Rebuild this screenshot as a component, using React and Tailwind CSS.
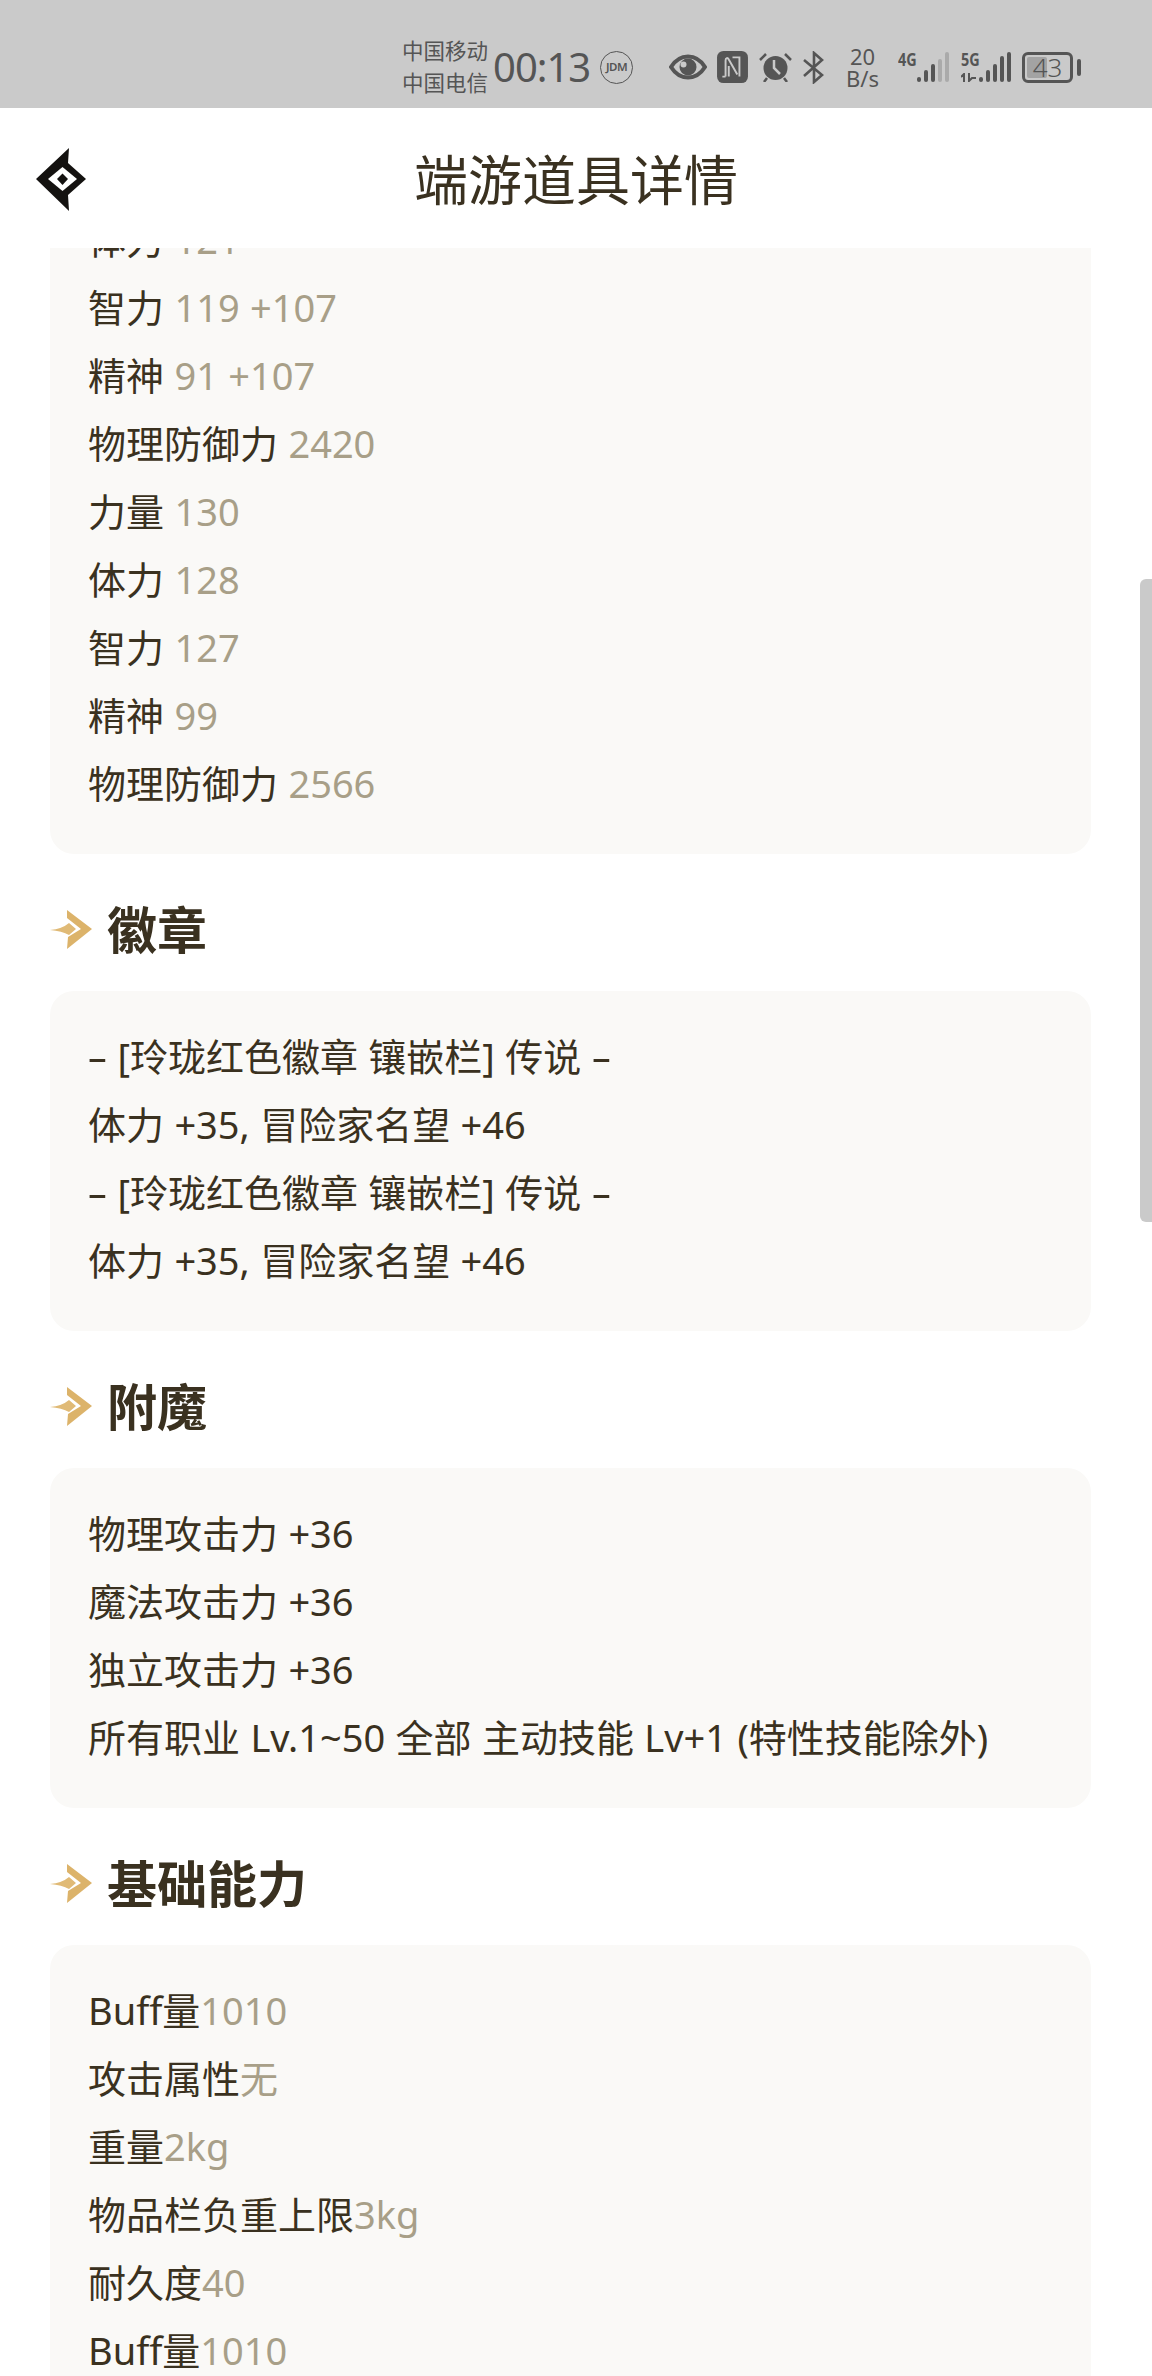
const FONT = "font-['Noto_Sans','Noto_Sans_CJK_SC',sans-serif]";

const stats = [
  ["体力", "121"],
  ["智力", "119 +107"],
  ["精神", "91 +107"],
  ["物理防御力", "2420"],
  ["力量", "130"],
  ["体力", "128"],
  ["智力", "127"],
  ["精神", "99"],
  ["物理防御力", "2566"],
];

const enchants = [
  "物理攻击力 +36",
  "魔法攻击力 +36",
  "独立攻击力 +36",
  "所有职业 Lv.1~50 全部 主动技能 Lv+1 (特性技能除外)",
];

const basics = [
  ["Buff量", "1010"],
  ["攻击属性", "无"],
  ["重量", "2kg"],
  ["物品栏负重上限", "3kg"],
  ["耐久度", "40"],
  ["Buff量", "1010"],
];

function Logo() {
  return (
    <svg width="51" height="64" viewBox="0 0 51 64" className="shrink-0">
      <path d="M0 31 L33 0 L32 15 L50 31 L32 47 L33 63 Z" fill="#141210" />
      <path d="M26.5 19 L41 31 L26.5 43 L12 31 Z" fill="#fff" />
      <path d="M26.5 25.5 L32 31 L26.5 37 L21 31 Z" fill="#141210" />
    </svg>
  );
}

function Arrow() {
  return (
    <svg width="42" height="40" viewBox="0 0 42 40" className="shrink-0">
      <path d="M17 0 L42 19 L17 39 L18 27 L31 19 L17 8 Z" fill="#dcb36a" />
      <path d="M0 20 Q12 19 19 13 L26 19 L19 25 Q12 21 0 20 Z" fill="#e0ba76" />
    </svg>
  );
}

function Heading({ children }) {
  return (
    <div className="mt-[42px] mb-[27px] h-[68px] flex items-center gap-[15px]">
      <Arrow />
      <h2 className="text-[50px] leading-none font-bold text-[#3a3120]">{children}</h2>
    </div>
  );
}

function Row({ label, value, gap = true }) {
  return (
    <div className="h-[68px] leading-[67px] text-[38px] whitespace-nowrap text-[#3a3120] [word-spacing:0.5px]">
      {label}
      {gap && value ? " " : ""}
      {value && <span className="text-[#a89f88]">{value}</span>}
    </div>
  );
}

// the hyphen in the reference's font is a lot wider than in Noto
function Dash() {
  return <span className="inline-block w-[19px] text-center scale-x-[1.7]">-</span>;
}

function BadgeTitle() {
  return (
    <Row
      label={
        <>
          <Dash /> [玲珑红色徽章 镶嵌栏] 传说 <Dash />
        </>
      }
    />
  );
}

function Signal({ label, active, heights, width, arrows }) {
  return (
    <div className="relative h-[30px] flex items-end justify-end gap-[3px]" style={{ width }}>
      <span className="absolute left-0 -top-[2px] text-[18px] leading-[18px] font-bold origin-left scale-x-[0.8] text-[#555]">{label}</span>
      {arrows && (
        <svg width="15" height="9" viewBox="0 0 15 9" className="absolute left-0 bottom-0">
          <path d="M3 9 V1 L0 4 M8 0 V8 L11 5 H15" fill="none" stroke="#555" strokeWidth="2" />
        </svg>
      )}
      {heights.map((h, i) => (
        <span
          key={i}
          className={i < active ? "w-[4px] rounded-[2px] bg-[#555]" : "w-[4px] rounded-[2px] bg-[#aaaaaa]"}
          style={{ height: h }}
        />
      ))}
    </div>
  );
}

function StatusBar() {
  return (
    <div className="h-[108px] bg-[#cacaca] shrink-0 flex items-center pt-[26px] pl-[402px] text-[#555]">
      <div className="w-[91px] text-[21.5px] leading-[32px]">
        <div>中国移动</div>
        <div>中国电信</div>
      </div>
      <div className="w-[107px] text-[40px] leading-none tracking-[-1px]">00:13</div>
      <div className="w-[33px] h-[33px] rounded-full border border-[#555] flex items-center justify-center text-[11.5px] font-semibold tracking-[-0.5px]">JDM</div>
      <svg width="38" height="26" viewBox="0 0 38 26" className="ml-[36px]">
        <path d="M2 13 C7 5 13 2.5 19 2.5 C25 2.5 31 5 36 13 C31 21 25 23.5 19 23.5 C13 23.5 7 21 2 13 Z" fill="none" stroke="#555" strokeWidth="4" />
        <circle cx="19" cy="13" r="8.5" fill="#555" />
        <circle cx="14.5" cy="10.5" r="3" fill="#cacaca" />
      </svg>
      <svg width="31" height="32" viewBox="0 0 29 30" className="ml-[10px]">
        <rect width="29" height="30" rx="6" fill="#555" />
        <path d="M8 24 V9 C8 6 10 6 11 8 L19 22 M14.5 6 H21 V24 M8 24 H5 M11 14 V24" fill="none" stroke="#cacaca" strokeWidth="1.8" />
      </svg>
      <svg width="33" height="30" viewBox="0 0 33 30" className="ml-[11px]">
        <circle cx="16.5" cy="16" r="12" fill="#555" />
        <path d="M15 8 V16 L21 22" fill="none" stroke="#cacaca" strokeWidth="2.5" />
        <path d="M1 8 L7 2 M32 8 L26 2 M8 26 L5 30 M25 26 L28 30" stroke="#555" strokeWidth="2.5" />
      </svg>
      <svg width="21" height="33" viewBox="0 0 21 33" className="ml-[11px]">
        <path d="M1 9 L19 24 L11 31 V2 L19 9 L1 25" fill="none" stroke="#555" strokeWidth="2.6" />
      </svg>
      <div className="ml-[21px] w-[35px] text-center text-[22px] leading-[22px]">
        <div>20</div>
        <div>B/s</div>
      </div>
      <div className="ml-[18px]">
        <Signal label="4G" active={3} width={51} heights={[5, 12, 18, 23, 30]} />
      </div>
      <div className="ml-[12px]">
        <Signal label="5G" active={5} width={50} heights={[5, 12, 18, 26, 30]} arrows />
      </div>
      <div className="ml-[11px] flex items-center gap-[4px]">
        <div className="relative w-[51px] h-[31px] rounded-[6px] border-[3px] border-[#555] flex items-center justify-center text-[26px] leading-none font-light">
          <span className="absolute left-[2px] top-[2px] bottom-[2px] w-[20px] rounded-[2px] bg-[#a3a3a3]" />
          <span className="relative">43</span>
        </div>
        <span className="w-[4px] h-[17px] rounded-[2px] bg-[#555]" />
      </div>
    </div>
  );
}

export default function App() {
  return (
    <div className={`relative w-[1152px] h-[2376px] overflow-hidden bg-white flex flex-col ${FONT}`}>
      <StatusBar />
      <header className="relative z-10 h-[140px] shrink-0 bg-white flex items-center justify-center">
        <div className="absolute left-[36px] top-[40px]">
          <Logo />
        </div>
        <h1 className="text-[54px] leading-none font-normal text-[#3a3120] mt-[4px]">端游道具详情</h1>
      </header>

      <main className="flex-1 overflow-hidden pl-[50px] pr-[61px]">
        <section className="-mt-[42px] bg-[#faf9f7] rounded-b-[24px] px-[38px] pb-[36px]">
          {stats.map((s, i) => (
            <Row key={i} label={s[0]} value={s[1]} />
          ))}
        </section>

        <Heading>徽章</Heading>
        <section className="bg-[#faf9f7] rounded-[24px] px-[38px] pt-[32px] pb-[36px]">
          <BadgeTitle />
          <Row label="体力 +35, 冒险家名望 +46" />
          <BadgeTitle />
          <Row label="体力 +35, 冒险家名望 +46" />
        </section>

        <Heading>附魔</Heading>
        <section className="bg-[#faf9f7] rounded-[24px] px-[38px] pt-[32px] pb-[36px]">
          {enchants.map((t, i) => (
            <Row key={i} label={t} />
          ))}
        </section>

        <Heading>基础能力</Heading>
        <section className="bg-[#faf9f7] rounded-t-[24px] px-[38px] pt-[32px] pb-[36px]">
          {basics.map((b, i) => (
            <Row key={i} label={b[0]} value={b[1]} gap={false} />
          ))}
        </section>
      </main>

      <div className="absolute right-0 top-[579px] h-[643px] w-[12px] rounded-l-[6px] bg-[#cacaca]" />
    </div>
  );
}
